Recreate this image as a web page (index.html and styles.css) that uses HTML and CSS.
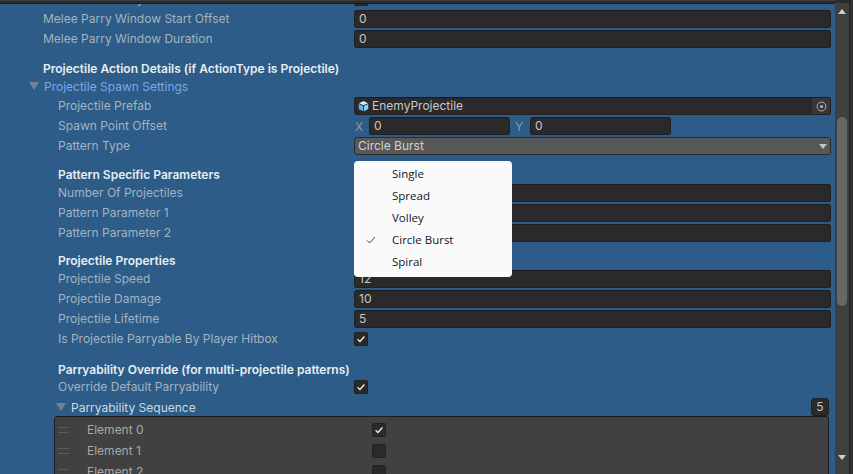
FILE: index.html
```html
<!DOCTYPE html>
<html lang="en">
<head>
<meta charset="utf-8">
<title>Inspector</title>
<link rel="stylesheet" href="styles.css">
</head>
<body>
<div class="window">
  <div class="panel">
    <div class="topbar"></div>
    <div class="viewport">
      <div class="scroll">
        <div class="row short"><span class="label l1">Is Melee Hit Parryable</span><span class="check"></span></div>
        <div class="row"><span class="label l1">Melee Parry Window Start Offset</span><span class="field">0</span></div>
        <div class="row"><span class="label l1">Melee Parry Window Duration</span><span class="field">0</span></div>

        <div class="head l1 h-first">Projectile Action Details (if ActionType is Projectile)</div>
        <div class="fold l1"><span class="tri"></span><span class="fold-blue">Projectile Spawn Settings</span></div>

        <div class="row"><span class="label l2">Projectile Prefab</span>
          <span class="field object">
            <svg class="cube" viewBox="0 0 12 12" aria-hidden="true"><path fill="#cfe9fb" d="M6 .6 11 3 6 5.3 1 3z"/><path fill="#5db4ee" d="M.8 3.8 5.5 6v5.6L.8 9.2z"/><path fill="#8ccdf5" d="M11.2 3.8 6.5 6v5.6l4.7-2.4z"/></svg>
            <span class="object-name">EnemyProjectile</span>
            <span class="picker"><svg viewBox="0 0 11 11" aria-hidden="true"><circle cx="5.5" cy="5.5" r="4.4" fill="none" stroke="#b4b4b4"/><circle cx="5.5" cy="5.5" r="1.6" fill="#b4b4b4"/></svg></span>
          </span>
        </div>
        <div class="row"><span class="label l2">Spawn Point Offset</span>
          <span class="vector">
            <span class="axis">X</span><span class="field vec">0</span>
            <span class="axis axis-y">Y</span><span class="field vec">0</span>
          </span>
        </div>
        <div class="row"><span class="label l2">Pattern Type</span><span class="select">Circle Burst<span class="caret"></span></span></div>

        <div class="head l2 h-pattern">Pattern Specific Parameters</div>
        <div class="row tight"><span class="label l2">Number Of Projectiles</span><span class="field"></span></div>
        <div class="row"><span class="label l2">Pattern Parameter 1</span><span class="field"></span></div>
        <div class="row"><span class="label l2">Pattern Parameter 2</span><span class="field"></span></div>

        <div class="head l2 h-props">Projectile Properties</div>
        <div class="row tight"><span class="label l2">Projectile Speed</span><span class="field">12</span></div>
        <div class="row"><span class="label l2">Projectile Damage</span><span class="field">10</span></div>
        <div class="row"><span class="label l2">Projectile Lifetime</span><span class="field">5</span></div>
        <div class="row"><span class="label l2">Is Projectile Parryable By Player Hitbox</span><span class="check on"><svg viewBox="0 0 14 14" aria-hidden="true"><path d="M3 7.4 5.7 10 11 4" fill="none" stroke="#e6e6e6" stroke-width="1.7"/></svg></span></div>

        <div class="head l2 h-override">Parryability Override (for multi-projectile patterns)</div>
        <div class="row tight"><span class="label l2">Override Default Parryability</span><span class="check on"><svg viewBox="0 0 14 14" aria-hidden="true"><path d="M3 7.4 5.7 10 11 4" fill="none" stroke="#e6e6e6" stroke-width="1.7"/></svg></span></div>

        <div class="seq-head"><span class="tri"></span><span class="seq-title">Parryability Sequence</span><span class="count">5</span></div>
        <div class="box">
          <div class="el"><span class="grip"></span><span class="el-label">Element 0</span><span class="check on"><svg viewBox="0 0 14 14" aria-hidden="true"><path d="M3 7.4 5.7 10 11 4" fill="none" stroke="#e6e6e6" stroke-width="1.7"/></svg></span></div>
          <div class="el"><span class="grip"></span><span class="el-label">Element 1</span><span class="check"></span></div>
          <div class="el"><span class="grip"></span><span class="el-label">Element 2</span><span class="check"></span></div>
        </div>
      </div>
      <ul class="menu">
        <li>Single</li>
        <li>Spread</li>
        <li>Volley</li>
        <li class="picked"><svg viewBox="0 0 10 10" aria-hidden="true"><path d="M1 5.4 3.6 8 9 2" fill="none" stroke="#444" stroke-width="1"/></svg>Circle Burst</li>
        <li>Spiral</li>
      </ul>
    </div>
  </div>
  <div class="scrollbar">
    <span class="arrow up"></span>
    <span class="thumb"></span>
    <span class="arrow down"></span>
  </div>
  <div class="edge"></div>
</div>
</body>
</html>
```

FILE: styles.css
```css
* { box-sizing: border-box; }
html, body { margin: 0; padding: 0; background: #383838; }
.window {
  width: 853px;
  height: 474px;
  display: flex;
  overflow: hidden;
  font-family: Inter, "Liberation Sans", sans-serif;
  font-size: 12px;
  color: #a5b3c1;
}
.panel { width: 835px; display: flex; flex-direction: column; background: #2c5c87; }
.topbar { height: 4px; flex: none; background: #2b2b2b; border-top: 1px solid #3c3c3c; border-bottom: 1px solid #1c1c1c; }
.viewport { flex: 1; position: relative; overflow: hidden; }
.scroll { margin-top: -14px; }

.row { display: grid; grid-template-columns: 354px 1fr 4px; height: 18px; margin-bottom: 2px; align-items: center; white-space: nowrap; }
.row.short { height: 18px; }
.label { line-height: 18px; }
.l1 { padding-left: 43px; }
.l2 { padding-left: 58px; }

.field {
  height: 18px;
  background: #2a2a2a;
  border: 1px solid #212121;
  border-top-color: #1b1b1b;
  border-radius: 3px;
  color: #c8c8c8;
  padding-left: 4px;
  line-height: 16px;
  display: block;
}
.object { display: flex; align-items: center; padding-left: 3px; padding-right: 0; }
.cube { width: 11px; height: 12px; flex: none; margin-right: 3px; }
.object-name { flex: 1; }
.picker { width: 18px; height: 16px; background: #373737; display: flex; align-items: center; justify-content: center; border-radius: 0 2px 2px 0; }
.picker svg { width: 11px; height: 11px; }

.vector { display: flex; align-items: center; }
.axis { width: 15px; padding-left: 1px; color: #8b9aa9; }
.axis-y { width: 20px; padding-left: 5px; }
.vec { width: 141px; }

.select {
  height: 18px;
  background: #585858;
  border: 1px solid #2a2a2a;
  border-radius: 3px;
  color: #d2d2d2;
  padding-left: 3px;
  line-height: 16px;
  display: flex;
  justify-content: space-between;
  align-items: center;
}
.caret { width: 0; height: 0; margin-right: 3px; border-left: 4px solid transparent; border-right: 4px solid transparent; border-top: 5px solid #c4c4c4; margin-top: 1px; }

.check {
  width: 14px;
  height: 14px;
  background: #2a2a2a;
  border: 1px solid #212121;
  border-radius: 2px;
  display: block;
}
.check svg { display: block; width: 12px; height: 12px; }

.head { font-weight: 600; color: #e6edf3; line-height: 16px; height: 16px; white-space: nowrap; }
.h-first { margin-top: 13px; }
.h-pattern { margin-top: 12px; margin-bottom: 1px; }
.h-props { margin-top: 11px; margin-bottom: 1px; }
.h-override { margin-top: 14px; }
.row.tight { margin-top: 0; }

.fold { display: flex; align-items: center; height: 16px; margin-top: 1px; margin-bottom: 3px; }
.fold.l1 { padding-left: 29px; }
.tri { width: 0; height: 0; border-left: 5px solid transparent; border-right: 5px solid transparent; border-top: 8px solid #6e8296; margin-right: 5px; flex: none; }
.fold-blue { color: #7ba7e6; }

.seq-head { display: flex; align-items: center; height: 18px; margin-top: 2px; padding-left: 56px; position: relative; }
.seq-title { color: #cfd9e3; flex: 1; }
.count {
  width: 18px;
  height: 18px;
  margin-right: 6px;
  background: #2a2a2a;
  border: 1px solid #212121;
  border-radius: 3px;
  color: #c8c8c8;
  text-align: center;
  line-height: 16px;
}

.box {
  margin-left: 54px;
  width: 775px;
  height: 70px;
  background: #414141;
  border: 1px solid #1c1c1c;
  border-radius: 3px 3px 0 0;
  padding-top: 2px;
}
.el { display: flex; align-items: center; height: 21px; }
.grip { width: 11px; height: 6px; margin-left: 3px; flex: none; border-top: 1px solid #5c5c5c; border-bottom: 1px solid #5c5c5c; }
.el-label { width: 285px; margin-left: 18px; color: #a8a8a8; }

.menu {
  position: absolute;
  left: 354px;
  top: 157px;
  width: 158px;
  height: 116px;
  margin: 0;
  padding: 2px 0;
  list-style: none;
  background: #fafafa;
  border-radius: 4px;
  font-family: "Open Sans", "Noto Sans", sans-serif;
  font-size: 11.5px;
  color: #101828;
}
.menu li { position: relative; height: 22px; line-height: 22px; padding-left: 38px; }
.menu li svg { position: absolute; left: 12px; top: 6px; width: 10px; height: 10px; }

.scrollbar {
  width: 14px;
  height: 100%;
  background: #3f3f3f;
  position: relative;
  display: flex;
  flex-direction: column;
  align-items: center;
  border-top: 3px solid #2b2b2b;
}
.arrow { width: 0; height: 0; border-left: 4px solid transparent; border-right: 4px solid transparent; }
.up { margin-top: 6px; border-bottom: 5px solid #d0d0d0; }
.down { margin-top: 149px; border-top: 5px solid #d0d0d0; }
.thumb { width: 10px; height: 189px; margin-top: 103px; background: #676767; border-radius: 5px; }
.edge { width: 4px; flex: none; background: #2f2f2f; border-left: 1px solid #232323; }
```
